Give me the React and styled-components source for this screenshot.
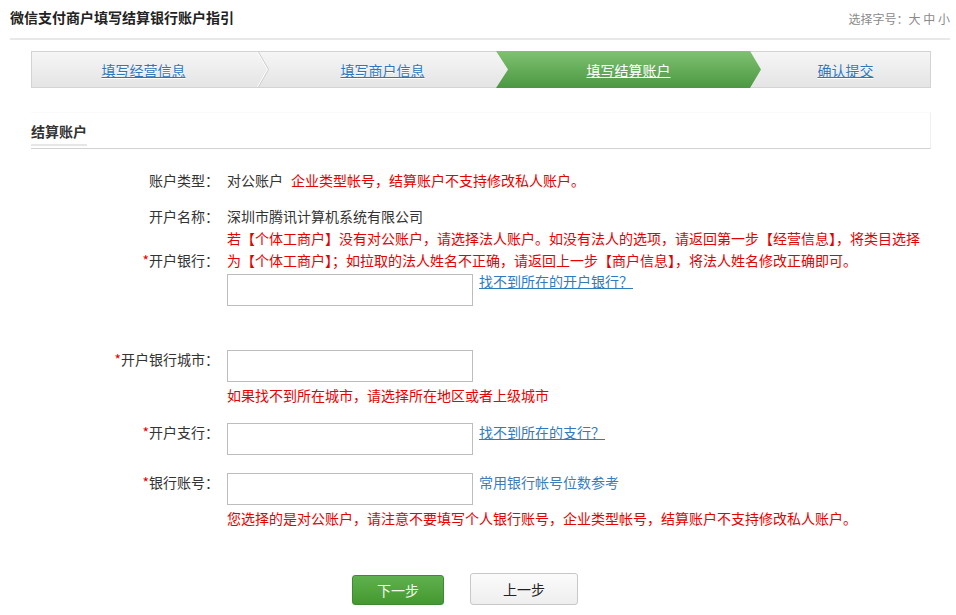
import React from 'react';
import styled, { createGlobalStyle } from 'styled-components';

const GlobalStyle = createGlobalStyle`
    body {
        margin: 0;
        background: #fff;
        font-family: "Microsoft YaHei", "Noto Sans CJK SC", sans-serif;
        color: #333;
    }
`

const steps = [
    { label: '填写经营信息', width: 231, shift: -8 },
    { label: '填写商户信息', width: 239 },
    { label: '填写结算账户', width: 265, active: true },
    { label: '确认提交', shift: 6 },
]

const App = () => {
    return (
        <Page>
            <GlobalStyle />
            <Header>
                <Title>微信支付商户填写结算银行账户指引</Title>
                <FontPicker>选择字号：大 中 小</FontPicker>
            </Header>
            <Body>
                <Steps>
                    {steps.map((step, index) => (
                        <Step key={step.label} $width={step.width} $active={step.active} $shift={step.shift}>
                            <StepLink href="#" $active={step.active}>{step.label}</StepLink>
                            {index === 0 && (
                                <Chevron viewBox="0 0 12 35" preserveAspectRatio="none">
                                    <polyline points="0.5,0 10.5,17.5 0.5,35" fill="none" stroke="#ffffff" strokeWidth="1" />
                                    <polyline points="1.5,0 11.5,17.5 1.5,35" fill="none" stroke="#cfcfcf" strokeWidth="1" />
                                </Chevron>
                            )}
                        </Step>
                    ))}
                </Steps>

                <SectionHead>
                    <SectionTitle>结算账户</SectionTitle>
                </SectionHead>

                <Form>
                    <Row $top={20}>
                        <Label $line={22}>账户类型：</Label>
                        <Value>
                            对公账户<Warn $inline>企业类型帐号，结算账户不支持修改私人账户。</Warn>
                        </Value>
                    </Row>
                    <Row $top={14}>
                        <Label $line={22}>开户名称：</Label>
                        <Value>深圳市腾讯计算机系统有限公司</Value>
                    </Row>
                    <Row $top={0}>
                        <Label $line={22} $pad={22}><Star>*</Star>开户银行：</Label>
                        <div>
                            <Warn>
                                若【个体工商户】没有对公账户，请选择法人账户。如没有法人的选项，请返回第一步【经营信息】，将类目选择<br />
                                为【个体工商户】；如拉取的法人姓名不正确，请返回上一步【商户信息】，将法人姓名修改正确即可。
                            </Warn>
                            <InputLine $top={3}>
                                <Input />
                                <Help href="#" $top={-2}>找不到所在的开户银行？</Help>
                            </InputLine>
                        </div>
                    </Row>
                    <Row $top={44}>
                        <Label><Star>*</Star>开户银行城市：</Label>
                        <div>
                            <InputLine>
                                <Input />
                            </InputLine>
                            <Warn $top={2}>如果找不到所在城市，请选择所在地区或者上级城市</Warn>
                        </div>
                    </Row>
                    <Row $top={17}>
                        <Label><Star>*</Star>开户支行：</Label>
                        <InputLine>
                            <Input />
                            <Help href="#">找不到所在的支行？</Help>
                        </InputLine>
                    </Row>
                    <Row $top={18}>
                        <Label><Star>*</Star>银行账号：</Label>
                        <div>
                            <InputLine>
                                <Input />
                                <Note>常用银行帐号位数参考</Note>
                            </InputLine>
                            <Warn $top={2}>您选择的是对公账户，请注意不要填写个人银行账号，企业类型帐号，结算账户不支持修改私人账户。</Warn>
                        </div>
                    </Row>
                </Form>

                <Buttons>
                    <Button $primary>下一步</Button>
                    <Button>上一步</Button>
                </Buttons>
            </Body>
        </Page>
    )
}

const Page = styled.div`
    padding: 0 6px 0 10px;
`

const Header = styled.div`
    display: flex;
    justify-content: space-between;
    align-items: center;
    height: 34px;
    padding-bottom: 4px;
    border-bottom: 2px solid #e8e8e8;
`

const Title = styled.h1`
    margin: 0;
    font-size: 14px;
    font-weight: 700;
    color: #222;
`

const FontPicker = styled.span`
    font-size: 12px;
    color: #8a8a8a;
    margin-top: 2px;
`

const Body = styled.div`
    margin: 0 19px 0 21px;
`

const Steps = styled.div`
    display: flex;
    margin-top: 11px;
    height: 35px;
    border: 1px solid #d3d3d3;
    background: linear-gradient(180deg, #f6f6f6 0%, #e4e4e4 100%);
`

const Step = styled.div`
    position: relative;
    box-sizing: border-box;
    display: flex;
    align-items: center;
    justify-content: center;
    flex: ${p => p.$width ? `0 0 ${p.$width}px` : '1'};
    padding-left: ${p => p.$shift > 0 ? p.$shift : 0}px;
    padding-right: ${p => p.$shift < 0 ? -p.$shift : 0}px;
    ${p => p.$active && `
        margin: -1px -6px;
        height: 37px;
        background: linear-gradient(180deg, #7fc271 0%, #4c9742 100%);
        clip-path: polygon(0 0, calc(100% - 11px) 0, 100% 50%, calc(100% - 11px) 100%, 0 100%, 12px 50%);
        z-index: 1;
    `}
`

const StepLink = styled.a`
    font-size: 14px;
    color: ${p => p.$active ? '#ffffff' : '#2b78bf'};
    text-decoration: underline;
    text-shadow: ${p => p.$active ? 'none' : '0 1px 0 #fff'};
`

const Chevron = styled.svg`
    position: absolute;
    right: -6px;
    top: 0;
    width: 12px;
    height: 35px;
`

const SectionHead = styled.div`
    margin-top: 24px;
    height: 30px;
    padding-top: 5px;
    border-bottom: 1px solid #d2d2d2;
    border-right: 1px solid #efefef;
    border-top: 1px solid #fafafa;
`

const SectionTitle = styled.span`
    display: inline-block;
    font-size: 14px;
    font-weight: 700;
    color: #333;
    line-height: 22px;
    padding-bottom: 2px;
    border-bottom: 2px solid #e6e6e6;
`

const Form = styled.div`
    font-size: 14px;
`

const Row = styled.div`
    display: grid;
    grid-template-columns: 188px 1fr;
    column-gap: 8px;
    margin-top: ${p => p.$top}px;
`

const Label = styled.div`
    text-align: right;
    color: #333;
    line-height: ${p => p.$line || 18}px;
    padding-top: ${p => p.$pad || 0}px;
`

const Star = styled.span`
    color: #e60000;
`

const Value = styled.div`
    line-height: 22px;
    color: #333;
`

const Warn = styled.div`
    display: ${p => p.$inline ? 'inline' : 'block'};
    margin-left: ${p => p.$inline ? '8px' : '0'};
    margin-top: ${p => p.$top || 0}px;
    color: #e60000;
    line-height: 22px;
    white-space: nowrap;
`

const InputLine = styled.div`
    display: flex;
    align-items: flex-start;
    gap: 6px;
    margin-top: ${p => p.$top || 0}px;
`

const Input = styled.input`
    box-sizing: border-box;
    width: 246px;
    height: 32px;
    margin: 0;
    border: 1px solid #bdbdbd;
    background: #fff;
    font-size: 14px;
    font-family: inherit;
`

const Help = styled.a`
    line-height: 18px;
    margin-top: ${p => p.$top || 0}px;
    font-size: 14px;
    color: #2f7bbf;
    text-decoration: underline;
`

const Note = styled.span`
    line-height: 18px;
    font-size: 14px;
    color: #3a7dbd;
`

const Buttons = styled.div`
    display: flex;
    align-items: center;
    gap: 26px;
    margin-top: 43px;
    padding-left: 321px;
`

const Button = styled.button`
    box-sizing: border-box;
    width: ${p => p.$primary ? '92px' : '108px'};
    height: ${p => p.$primary ? '30px' : '32px'};
    margin-top: ${p => p.$primary ? '3px' : '0'};
    border-radius: 3px;
    font-size: 14px;
    font-family: inherit;
    cursor: pointer;
    color: ${p => p.$primary ? '#f2fbe9' : '#222'};
    border: 1px solid ${p => p.$primary ? '#3d8a33' : '#c8c8c8'};
    background: ${p => p.$primary
        ? 'linear-gradient(180deg, #5fb14f 0%, #45982f 100%)'
        : 'linear-gradient(180deg, #fbfbfb 0%, #eeeeee 100%)'};
`

export default App
